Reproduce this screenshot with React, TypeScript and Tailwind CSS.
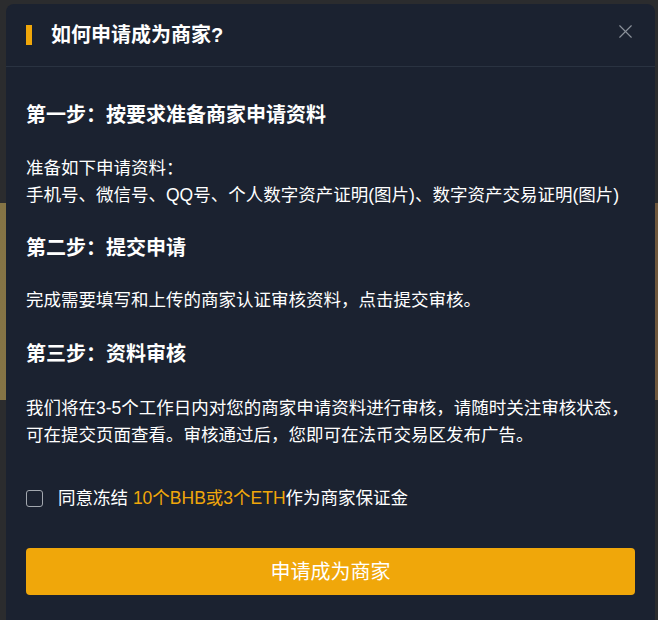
import { X } from "lucide-react";

const font = {
  fontFamily: '"Liberation Sans", "Noto Sans CJK SC", sans-serif',
};

export default function App() {
  return (
    <div
      className="relative h-[620px] w-[658px] overflow-hidden bg-[#2b2c2e]"
      style={font}
    >
      {/* page behind the overlay */}
      <div className="mt-[203px] h-[197px] w-full bg-gradient-to-r from-[#857445] to-[#6e573c]" />

      <div className="absolute left-[6px] top-[4px] w-[649px] rounded-[8px] bg-[#1b2230] pb-[40px]">
        <div className="flex h-[63px] items-center border-b border-[#2a3341] pl-5 pr-[18px]">
          <span className="h-[20px] w-[6px] bg-[#f0a70a]" />
          <h2 className="ml-[19px] text-[20px] font-bold leading-[28px] text-white">
            如何申请成为商家?
          </h2>
          <button className="ml-auto -mt-[7px] text-[#8a9099]">
            <X className="h-[23px] w-[23px]" strokeWidth={1.2} />
          </button>
        </div>

        <div className="px-5 pt-[34px] text-white">
          <h3 className="text-[20px] font-bold leading-[28px]">
            第一步：按要求准备商家申请资料
          </h3>
          <p className="mt-[26px] text-[17.5px] leading-[27px]">
            准备如下申请资料：
            <br />
            手机号、微信号、QQ号、个人数字资产证明(图片)、数字资产交易证明(图片)
          </p>

          <h3 className="mt-[25px] text-[20px] font-bold leading-[28px]">
            第二步：提交申请
          </h3>
          <p className="mt-[25px] text-[17.5px] leading-[27px]">
            完成需要填写和上传的商家认证审核资料，点击提交审核。
          </p>

          <h3 className="mt-[26px] text-[20px] font-bold leading-[28px]">
            第三步：资料审核
          </h3>
          <p className="mt-[27px] text-[17.5px] leading-[27px]">
            我们将在3-5个工作日内对您的商家申请资料进行审核，请随时关注审核状态，
            <br />
            可在提交页面查看。审核通过后，您即可在法币交易区发布广告。
          </p>

          <label className="mt-[36px] flex items-center text-[17.5px] leading-[27px]">
            <span className="h-[17px] w-[17px] rounded-[3px] border border-[#a3a8af]" />
            <span className="ml-[15px]">
              同意冻结 <span className="text-[#f0a70a]">10个BHB或3个ETH</span>
              作为商家保证金
            </span>
          </label>

          <button className="mt-[36px] flex h-[47px] w-full items-center justify-center rounded-[4px] bg-[#f0a70a] text-[20px] text-white">
            申请成为商家
          </button>
        </div>
      </div>
    </div>
  );
}
